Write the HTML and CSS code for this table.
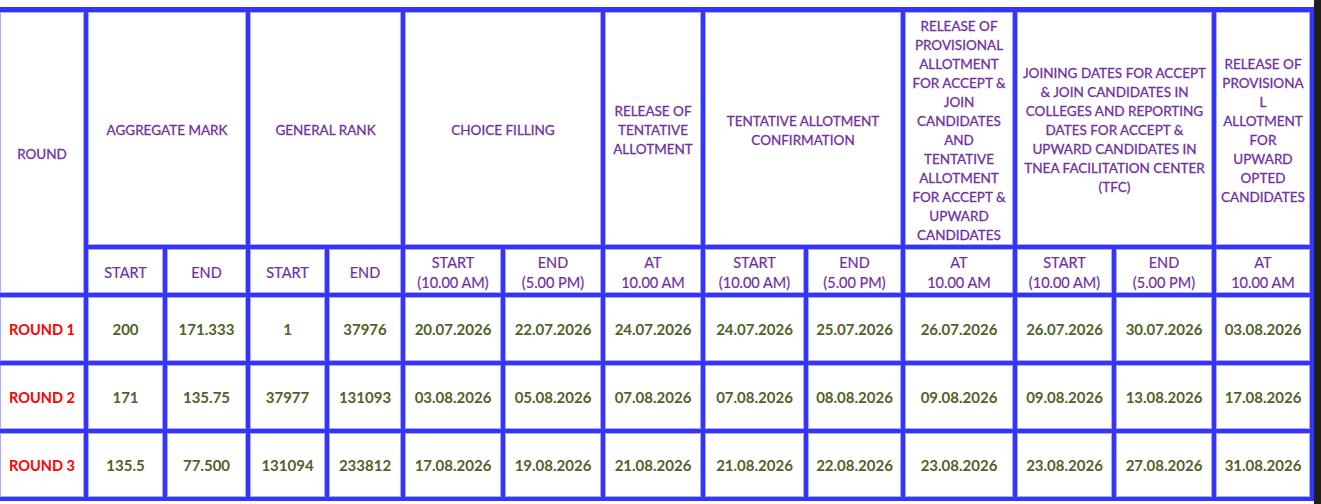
FILE: index.html
```html
<!DOCTYPE html>
<html>
<head>
<meta charset="utf-8">
<link rel="stylesheet" href="styles.css">
</head>
<body>
<div class="page">
  <div class="sheet">
    <div class="grid">
      <div class="cell hd round-h">ROUND</div>
      <div class="cell hd span2">AGGREGATE MARK</div>
      <div class="cell hd span2">GENERAL RANK</div>
      <div class="cell hd span2">CHOICE FILLING</div>
      <div class="cell hd">RELEASE OF<br>TENTATIVE<br>ALLOTMENT</div>
      <div class="cell hd span2">TENTATIVE ALLOTMENT<br>CONFIRMATION</div>
      <div class="cell hd">RELEASE OF<br>PROVISIONAL<br>ALLOTMENT<br>FOR ACCEPT &amp;<br>JOIN<br>CANDIDATES<br>AND<br>TENTATIVE<br>ALLOTMENT<br>FOR ACCEPT &amp;<br>UPWARD<br>CANDIDATES</div>
      <div class="cell hd span2">JOINING DATES FOR ACCEPT<br>&amp; JOIN CANDIDATES IN<br>COLLEGES AND REPORTING<br>DATES FOR ACCEPT &amp;<br>UPWARD CANDIDATES IN<br>TNEA FACILITATION CENTER<br>(TFC)</div>
      <div class="cell hd">RELEASE OF<br>PROVISIONA<br>L<br>ALLOTMENT<br>FOR<br>UPWARD<br>OPTED<br>CANDIDATES</div>

      <div class="cell sub">START</div>
      <div class="cell sub">END</div>
      <div class="cell sub">START</div>
      <div class="cell sub">END</div>
      <div class="cell sub">START<br>(10.00 AM)</div>
      <div class="cell sub">END<br>(5.00 PM)</div>
      <div class="cell sub">AT<br>10.00 AM</div>
      <div class="cell sub">START<br>(10.00 AM)</div>
      <div class="cell sub">END<br>(5.00 PM)</div>
      <div class="cell sub">AT<br>10.00 AM</div>
      <div class="cell sub">START<br>(10.00 AM)</div>
      <div class="cell sub">END<br>(5.00 PM)</div>
      <div class="cell sub">AT<br>10.00 AM</div>

      <div class="cell rnd">ROUND 1</div>
      <div class="cell val">200</div>
      <div class="cell val">171.333</div>
      <div class="cell val">1</div>
      <div class="cell val">37976</div>
      <div class="cell val">20.07.2026</div>
      <div class="cell val">22.07.2026</div>
      <div class="cell val">24.07.2026</div>
      <div class="cell val">24.07.2026</div>
      <div class="cell val">25.07.2026</div>
      <div class="cell val">26.07.2026</div>
      <div class="cell val">26.07.2026</div>
      <div class="cell val">30.07.2026</div>
      <div class="cell val">03.08.2026</div>

      <div class="cell rnd">ROUND 2</div>
      <div class="cell val">171</div>
      <div class="cell val">135.75</div>
      <div class="cell val">37977</div>
      <div class="cell val">131093</div>
      <div class="cell val">03.08.2026</div>
      <div class="cell val">05.08.2026</div>
      <div class="cell val">07.08.2026</div>
      <div class="cell val">07.08.2026</div>
      <div class="cell val">08.08.2026</div>
      <div class="cell val">09.08.2026</div>
      <div class="cell val">09.08.2026</div>
      <div class="cell val">13.08.2026</div>
      <div class="cell val">17.08.2026</div>

      <div class="cell rnd">ROUND 3</div>
      <div class="cell val">135.5</div>
      <div class="cell val">77.500</div>
      <div class="cell val">131094</div>
      <div class="cell val">233812</div>
      <div class="cell val">17.08.2026</div>
      <div class="cell val">19.08.2026</div>
      <div class="cell val">21.08.2026</div>
      <div class="cell val">21.08.2026</div>
      <div class="cell val">22.08.2026</div>
      <div class="cell val">23.08.2026</div>
      <div class="cell val">23.08.2026</div>
      <div class="cell val">27.08.2026</div>
      <div class="cell val">31.08.2026</div>
    </div>
  </div>
  <div class="edge"></div>
</div>
</body>
</html>
```
FILE: styles.css
```css
html, body {
  margin: 0;
  padding: 0;
  background: #ffffff;
}

.page {
  display: flex;
  height: 504px;
  overflow: hidden;
}

.sheet {
  padding-top: 7px;
  width: 1314px;
  flex: none;
}

.edge {
  flex: 1;
  background: #1f1f1f;
}

.grid {
  display: grid;
  grid-template-columns: 84px 75px 79px 75px 72px 96px 96px 96px 99px 93px 108px 95px 96px 94px;
  grid-template-rows: 233px 44px 64px 64px 64px;
  gap: 4px;
  background: #3535fa;
  padding: 5px 4px 4px 0;
  font-family: Lato, "Open Sans", sans-serif;
}

.cell {
  background: #ffffff;
  border: 1px solid #a9a9ff;
  display: flex;
  align-items: center;
  justify-content: center;
  text-align: center;
  white-space: nowrap;
  box-sizing: border-box;
}

.hd {
  color: #7030a0;
  font-size: 13.5px;
  line-height: 19px;
  padding-top: 4px;
  -webkit-text-stroke: 0.3px #7030a0;
}

.round-h {
  grid-row: span 2;
}

.span2 {
  grid-column: span 2;
}

.sub {
  color: #7030a0;
  font-size: 14.5px;
  line-height: 20px;
  padding-top: 4px;
  -webkit-text-stroke: 0.2px #7030a0;
}

.val {
  color: #4f6228;
  font-size: 15px;
  font-weight: bold;
}

.rnd {
  color: #ff0000;
  font-size: 14.5px;
  font-weight: bold;
}
```
